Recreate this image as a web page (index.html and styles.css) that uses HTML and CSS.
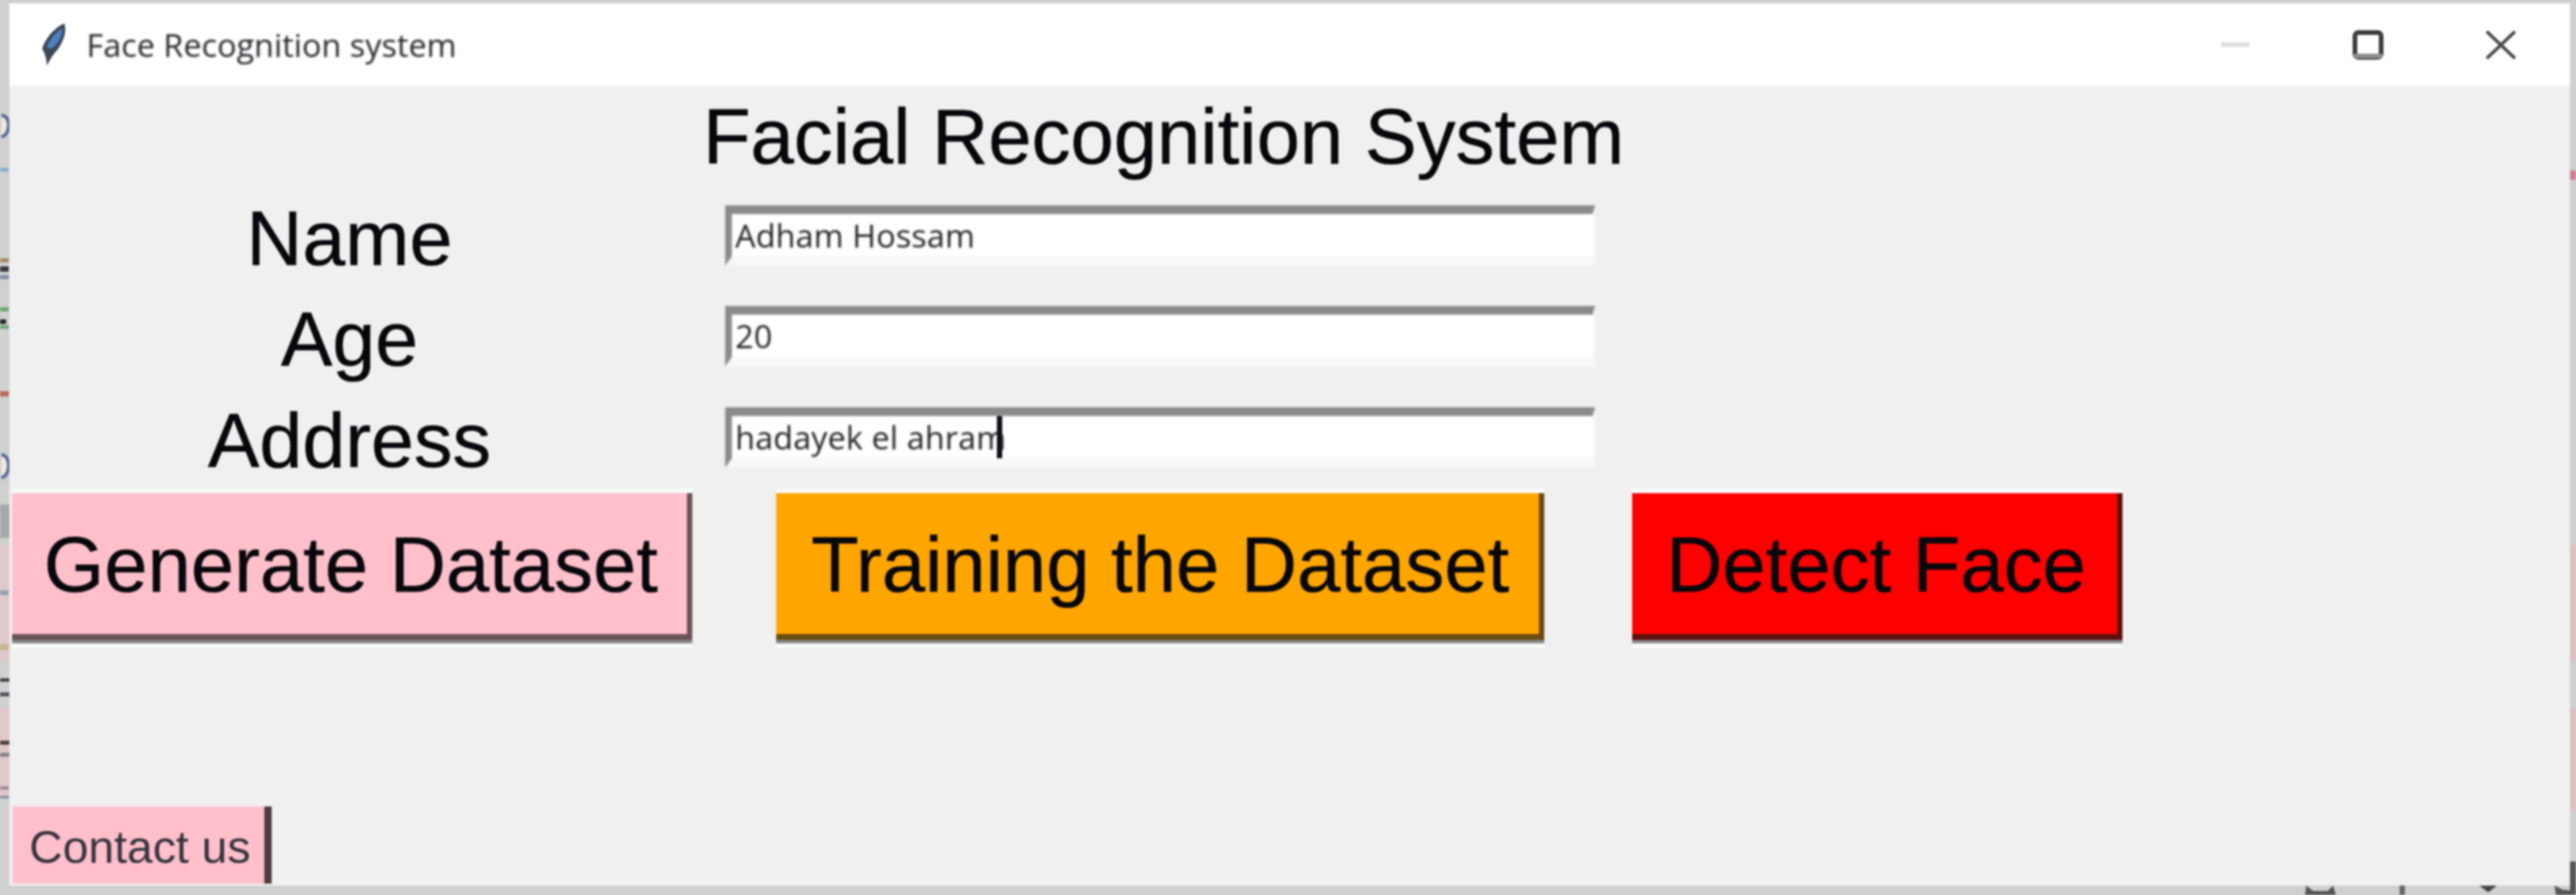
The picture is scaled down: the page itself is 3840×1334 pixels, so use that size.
FILE: index.html
```html
<!DOCTYPE html>
<html lang="en">
<head>
<meta charset="utf-8">
<title>Face Recognition system</title>
<link rel="stylesheet" href="styles.css">
</head>
<body>
<div class="screen">
  <svg class="edge edge-left" viewBox="0 0 14 1334" aria-hidden="true">
    <path d="M2 172 Q12 172 13 186 Q12 202 2 204" fill="#f0e8d8" stroke="#5a6d9a" stroke-width="5"/>
    <rect y="250" width="13" height="6" fill="#8fb0d0"/>
    <rect y="385" width="13" height="6" fill="#a78a5c"/>
    <rect y="397" width="13" height="8" fill="#3a3640"/>
    <rect y="410" width="13" height="6" fill="#7d8da8"/>
    <rect y="458" width="13" height="6" fill="#6aa870"/>
    <rect y="476" width="9" height="7" fill="#1e2a22"/>
    <rect y="485" width="13" height="5" fill="#6aa870"/>
    <rect y="583" width="13" height="8" fill="#b86a58"/>
    <path d="M2 678 Q12 678 13 694 Q12 710 2 712" fill="#f0e8d8" stroke="#5a6d9a" stroke-width="5"/>
    <rect y="752" width="14" height="50" fill="#a8a8a8"/>
    <rect y="813" width="13" height="173" fill="#e3c6ca"/>
    <rect y="880" width="13" height="7" fill="#9a9fb4"/>
    <rect y="960" width="13" height="9" fill="#c6b48e"/>
    <rect y="1011" width="14" height="5" fill="#433c44"/>
    <rect y="1032" width="14" height="6" fill="#56525e"/>
    <rect y="1055" width="13" height="135" fill="#e3c6ca"/>
    <rect y="1104" width="14" height="6" fill="#4a3e40"/>
    <rect y="1122" width="14" height="6" fill="#86858a"/>
    <rect y="1172" width="13" height="5" fill="#9c8a96"/>
    <rect y="1186" width="13" height="4" fill="#8c90a6"/>
  </svg>
  <svg class="edge edge-right" viewBox="0 0 9 1334" aria-hidden="true">
    <rect x="0" y="254" width="9" height="14" fill="#c8808c"/>
    <rect x="0" y="813" width="9" height="173" fill="#dcc0c0"/>
    <rect x="0" y="1055" width="9" height="154" fill="#dcc0c0"/>
    <rect x="0" y="1284" width="9" height="50" fill="#55545a"/>
  </svg>
  <svg class="edge edge-bottom" viewBox="0 0 3840 14" aria-hidden="true">
    <path d="M3438 0 L3448 8 L3470 8 L3478 0 L3482 14 L3436 14 Z" fill="#555"/>
    <rect x="3577" y="0" width="8" height="14" fill="#666"/>
    <path d="M3696 0 L3722 0 L3709 10 Z" fill="#444"/>
    <path d="M3808 0 L3820 6 L3840 8 L3840 14 L3810 14 Z" fill="#555"/>
  </svg>

  <main class="window">
    <header class="titlebar">
      <svg class="feather" viewBox="0 0 38 65" aria-hidden="true">
        <path d="M34 1C22 5 6 22 1 38C3 44 7 48 8 64C12 56 16 48 24 40C32 28 38 14 34 1Z" fill="#3d4754"/>
        <path d="M31 8C23 12 12 24 8 36C12 40 16 38 20 34C27 26 32 16 31 8Z" fill="#4a82c0"/>
      </svg>
      <span class="window-title">Face Recognition system</span>
      <div class="controls">
        <button class="control" aria-label="Minimize"><span class="minimize"></span></button>
        <button class="control" aria-label="Maximize">
          <svg class="glyph" viewBox="0 0 46 44"><rect x="3.5" y="3.5" width="39" height="37" rx="5" fill="#fff" stroke="#3c3c3c" stroke-width="7"/><rect x="1" y="35" width="44" height="7" rx="3" fill="#8d8d8d"/></svg>
        </button>
        <button class="control" aria-label="Close">
          <svg class="glyph" viewBox="0 0 46 44"><path d="M2 2L44 42M44 2L2 42" stroke="#4a4a4a" stroke-width="5" fill="none"/></svg>
        </button>
      </div>
    </header>

    <div class="form">
      <h1 class="heading">Facial Recognition System</h1>

      <label class="field-label" for="name">Name</label>
      <div class="entry"><input class="entry-input" id="name" value="Adham Hossam"></div>

      <label class="field-label" for="age">Age</label>
      <div class="entry"><input class="entry-input" id="age" value="20"></div>

      <label class="field-label" for="address">Address</label>
      <div class="entry"><input class="entry-input" id="address" value="hadayek el ahram"><span class="caret"></span></div>

      <button class="action action-pink"><span class="action-text">Generate Dataset</span></button>
      <button class="action action-orange"><span class="action-text">Training the Dataset</span></button>
      <button class="action action-red"><span class="action-text">Detect Face</span></button>
    </div>

    <button class="contact">Contact us</button>
  </main>
</div>
</body>
</html>
```
FILE: styles.css
```css
html, body {
  margin: 0;
  height: 100%;
  overflow: hidden;
  background: #d2d2d2;
}

.screen {
  position: relative;
  box-sizing: border-box;
  height: 100vh;
  padding: 5px 9px 14px 14px;
  display: flex;
  background: #d0d0d0;
  filter: blur(1.4px);
  font-family: "Liberation Sans", Arial, sans-serif;
  color: #08080c;
}

.edge { position: absolute; }
.edge-left { left: 0; top: 0; width: 14px; height: 1334px; }
.edge-right { right: 0; top: 0; width: 9px; height: 1334px; }
.edge-bottom { left: 0; bottom: 0; width: 3840px; height: 14px; }

.window {
  flex: 1;
  display: flex;
  flex-direction: column;
  background: #f0f0f0;
}

.titlebar {
  flex: none;
  height: 123px;
  display: flex;
  align-items: center;
  padding-left: 48px;
  background: #fff;
}

.feather { width: 38px; height: 65px; margin-right: 29px; }

.window-title {
  font-family: "Open Sans", "Noto Sans", sans-serif;
  font-size: 48px;
  letter-spacing: 0.15px;
  color: #24242a;
  filter: blur(1.2px);
}

.controls { margin-left: auto; margin-right: 4px; display: flex; }

.control {
  width: 198px;
  height: 60px;
  padding: 0;
  border: 0;
  background: none;
  display: flex;
  align-items: center;
  justify-content: center;
}

.minimize { width: 42px; height: 7px; background: #dedede; }
.glyph { width: 46px; height: 44px; }

.form {
  display: grid;
  grid-template-columns: 1014px 1297px 737px;
  grid-template-rows: 148px 150px 150px 152px 226px;
  column-gap: 49px;
  padding-left: 4px;
  align-items: center;
}

.heading {
  grid-column: 2;
  justify-self: center;
  margin: 0;
  padding: 4px 0 0 10px;
  font-size: 116px;
  font-weight: 400;
  line-height: 1;
  white-space: nowrap;
  -webkit-text-stroke: 0.7px #08080c;
}

.field-label {
  grid-column: 1;
  padding-top: 8px;
  font-size: 115px;
  line-height: 1;
  text-align: center;
  transform: translateX(-4px);
  -webkit-text-stroke: 0.7px #08080c;
}

.entry {
  grid-column: 2;
  position: relative;
  height: 90px;
}

.entry-input {
  display: block;
  box-sizing: border-box;
  width: 100%;
  height: 100%;
  margin: 0;
  padding: 0 0 0 5px;
  border-style: solid;
  border-width: 13px 4px 14px 10px;
  border-color: #8a8a8a #f8f8f8 #f8f8f8 #8a8a8a;
  border-radius: 0;
  outline: 0;
  background: #fff;
  font-family: "Open Sans", "Noto Sans", sans-serif;
  font-size: 48px;
  letter-spacing: 0.3px;
  color: #1e1e24;
  filter: blur(0.8px);
}

.caret {
  position: absolute;
  left: 405px;
  top: 13px;
  width: 8px;
  height: 63px;
  background: #101018;
}

.action {
  align-self: stretch;
  box-sizing: border-box;
  margin: 7px 0 0;
  border-style: solid;
  border-width: 0 8px 9px 0;
  font-family: inherit;
  font-size: 116px;
  color: #08080c;
  white-space: nowrap;
  box-shadow: 0 -7px 0 #f8fbfb, 0 5px 0 #8a8a8a, 0 12px 0 #f8f9f9;
  -webkit-text-stroke: 0.7px #08080c;
}

.action-text { position: relative; top: 2px; }

.action-pink { grid-column: 1; padding: 0 0 0 4px; background: #ffc0cb; border-color: #6b5257; }
.action-orange {
  grid-column: 2;
  justify-self: center;
  width: 1145px;
  padding: 0 0 0 8px;
  background: #ffa500;
  border-color: #6b4c12;
}
.action-red {
  grid-column: 3;
  justify-self: end;
  width: 731px;
  padding: 0 0 0 4px;
  background: #ff0000;
  border-color: #5c120c;
}

.contact {
  align-self: flex-start;
  box-sizing: border-box;
  width: 386px;
  height: 115px;
  margin: auto 0 3px 5px;
  padding: 5px 0 0 4px;
  border: 0;
  border-right: 11px solid #4c3c40;
  background: #ffc0cb;
  font-family: inherit;
  font-size: 69px;
  color: #34343e;
  white-space: nowrap;
}
```
